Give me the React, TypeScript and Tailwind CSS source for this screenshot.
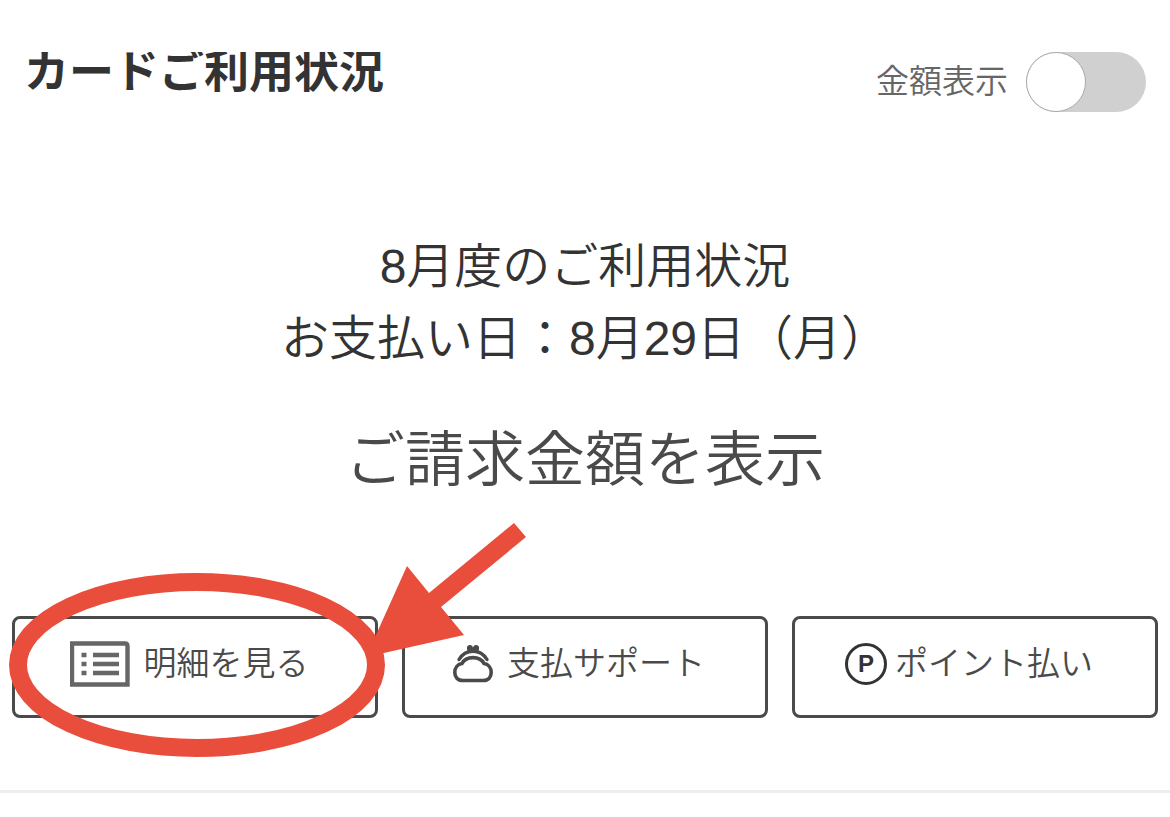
import { useState } from "react";
import type { ReactNode } from "react";

function StatementIcon() {
  return (
    <svg width="60" height="46" viewBox="0 0 60 46" fill="none" aria-hidden="true">
      <path d="M2 2.500H55Q57.500 2.500 57.500 5V43.500H2Z" stroke="#666" strokeWidth="4.400" />
      <path d="M11.500 14H16.500M11.500 23H16.500M11.500 32H16.500M23 14H49M23 23H49M23 32H49" stroke="#666" strokeWidth="4.400" />
    </svg>
  );
}

function PurseIcon() {
  return (
    <svg width="40" height="40" viewBox="0 0 40 40" fill="none" stroke="#4a4a4a" aria-hidden="true">
      <path
        d="M10 36.500C4.500 36.500 1.800 33 1.800 28.500C1.800 23.500 5 20 9 19.500C11.500 14.800 15.500 13.600 20 13.600S28.500 14.800 31 19.500C35 20 38.200 23.500 38.200 28.500C38.200 33 35.500 36.500 30 36.500Z"
        strokeWidth="3.600"
      />
      <path d="M6 15.500C9 10.500 14 7.200 20 7.200S31 10.500 34 15.500" strokeWidth="3.400" strokeLinecap="round" />
      <path d="M14 4.500a3 3 0 0 1 6-1a3 3 0 0 1 6 1q0 3-3 4h-6q-3-1-3-4Z" fill="#4a4a4a" stroke="none" />
    </svg>
  );
}

function PointIcon() {
  return (
    <span
      className="flex size-[42px] items-center justify-center rounded-full border-3 border-[#333] text-2xl font-bold text-[#333]"
      aria-hidden="true"
    >
      P
    </span>
  );
}

// Red circle and arrow drawn over the first action
function Highlight() {
  return (
    <svg
      className="pointer-events-none absolute -top-[93px] -left-[3px] z-10"
      width="518"
      height="235"
      viewBox="0 0 518 235"
      aria-hidden="true"
    >
      <ellipse cx="188" cy="142" rx="179" ry="83" fill="none" stroke="#e94e3d" strokeWidth="18" />
      <path d="M505 0L517 14L432 84L455 112L357 134L398 43L420 70Z" fill="#e94e3d" />
    </svg>
  );
}

interface ActionProps {
  icon: ReactNode;
  label: string;
  gap: string;
  highlighted?: boolean;
}

function Action({ icon, label, gap, highlighted }: ActionProps) {
  return (
    <div className="relative flex-1">
      <button
        type="button"
        className={`flex h-[102px] w-full items-center justify-center rounded-lg border-3 border-[#4a4a4a] pr-3 pb-1.5 text-[33px] font-[350] whitespace-nowrap text-[#4a4a4a] ${gap}`}
      >
        {icon}
        <span>{label}</span>
      </button>
      {highlighted && <Highlight />}
    </div>
  );
}

export default function App() {
  const [showAmount, setShowAmount] = useState(false);

  return (
    <main className="bg-white font-['Liberation_Sans','Noto_Sans_CJK_JP',sans-serif] text-[#333]">
      <section className="border-b-3 border-[#eee] px-3 pt-[52px] pb-[72px]">
        <header className="flex items-start justify-between px-3">
          <h1 className="h-11 overflow-hidden text-[45px] leading-[42px] font-bold">カードご利用状況</h1>
          <label className="-mr-3 flex items-center gap-[18px] pr-3 text-[33px] font-[350] text-[#666]">
            金額表示
            <input
              type="checkbox"
              role="switch"
              checked={showAmount}
              onChange={(e) => setShowAmount(e.target.checked)}
              className="h-[60px] w-[120px] appearance-none rounded-full bg-[#d0d0d0] before:block before:size-[60px] before:rounded-full before:border before:border-[#aaa] before:bg-white checked:bg-[#4a4a4a] checked:before:translate-x-[60px]"
            />
          </label>
        </header>

        <div className="mt-[119px] text-center text-[48px] leading-[72px] font-[350]">
          <p>8月度のご利用状況</p>
          <p>お支払い日：8月29日（月）</p>
        </div>

        <div className="mt-[41px] text-center">
          <button type="button" className="text-[60px] leading-[90px] font-[350] text-[#4a4a4a]">
            ご請求金額を表示
          </button>
        </div>

        <div className="mt-[110px] flex gap-6">
          <Action icon={<StatementIcon />} label="明細を見る" gap="gap-[14px]" highlighted />
          <Action icon={<PurseIcon />} label="支払サポート" gap="gap-[14px]" />
          <Action icon={<PointIcon />} label="ポイント払い" gap="gap-2" />
        </div>
      </section>
    </main>
  );
}
